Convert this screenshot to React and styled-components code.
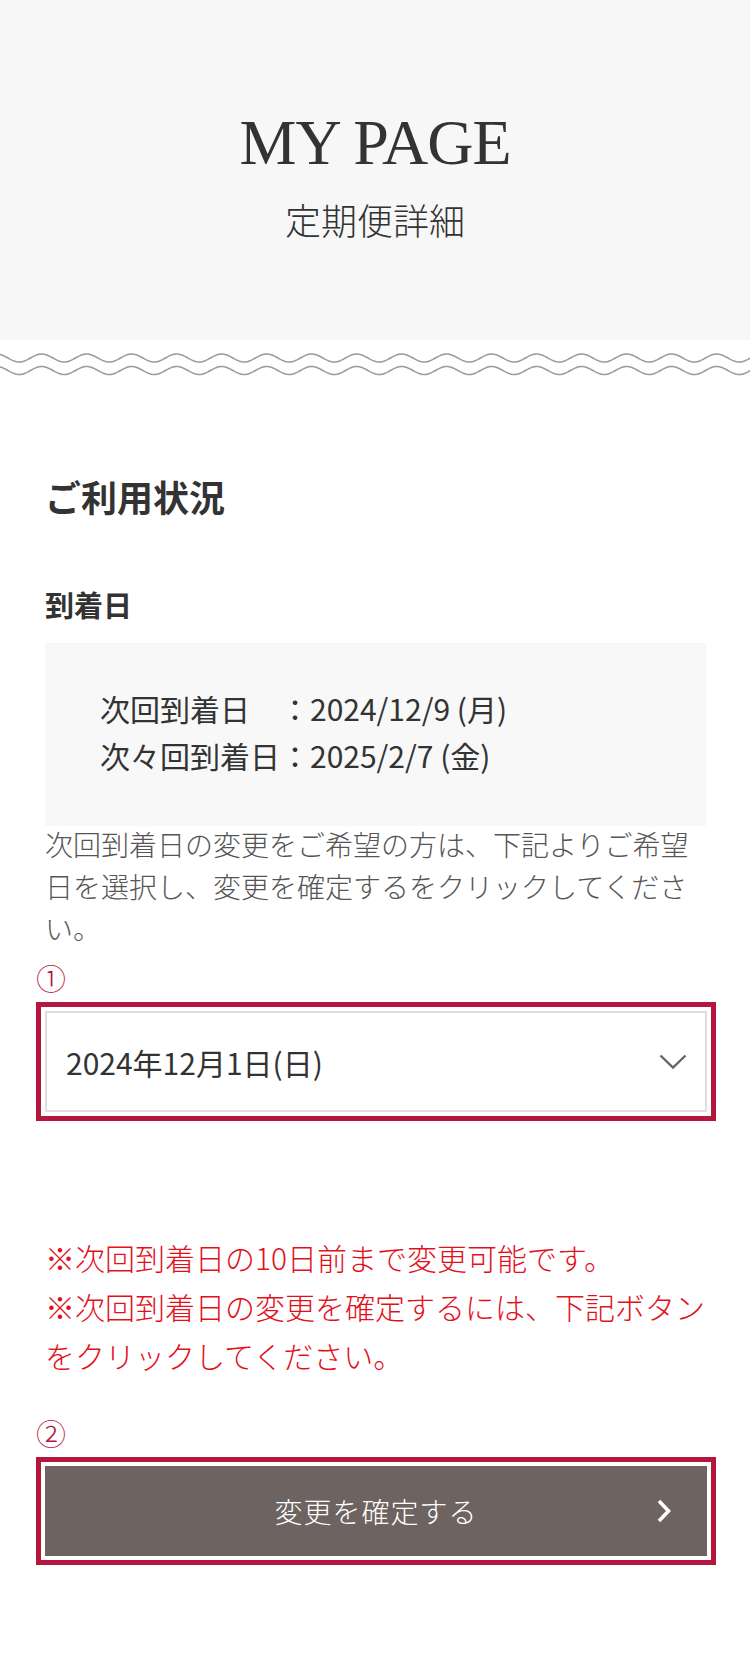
import React from "react";
import styled, { createGlobalStyle } from "styled-components";

const GlobalStyle = createGlobalStyle`
  html, body {
    margin: 0;
    padding: 0;
    background: #ffffff;
  }
  body {
    font-family: "Noto Sans CJK JP", "Noto Sans", sans-serif;
    color: #333333;
  }
  *, *::before, *::after {
    box-sizing: border-box;
  }
`;

const CRIMSON = "#b5163e";

const Page = styled.div`
  width: 750px;
  min-height: 1656px;
  background: #ffffff;
`;

const Header = styled.header`
  height: 340px;
  background: #f7f7f7;
  padding-top: 111px;
  text-align: center;
`;

const PageTitle = styled.h1`
  margin: 0;
  font-family: "Liberation Serif", "Times New Roman", serif;
  font-weight: 400;
  font-size: 64px;
  line-height: 64px;
  letter-spacing: -1px;
  color: #333333;
`;

const PageSubtitle = styled.p`
  margin: 19px 0 0;
  font-size: 36px;
  line-height: 50px;
  font-weight: 300;
  color: #333333;
`;

const WaveBand = styled.svg`
  display: block;
  width: 750px;
  height: 44px;
`;

const Main = styled.main`
  padding: 86px 44px 91px 45px;
`;

const SectionTitle = styled.h2`
  margin: 0;
  font-size: 36px;
  line-height: 52px;
  font-weight: 700;
  color: #333333;
`;

const FieldLabel = styled.h3`
  margin: 62px 0 0;
  font-size: 29px;
  line-height: 40px;
  font-weight: 700;
  color: #333333;
`;

const DateBox = styled.div`
  margin-top: 19px;
  background: #f8f8f8;
  padding: 42px 55px 47px;
`;

const DateRow = styled.p`
  margin: 0;
  font-size: 30px;
  line-height: 47px;
  color: #333333;
  white-space: nowrap;
`;

const Guide = styled.p`
  margin: -3px 0 0;
  font-size: 28px;
  line-height: 42px;
  font-weight: 300;
  color: #555555;
`;

const Step = styled.div`
  margin: ${(p) => p.$top}px -10px 0 -9px;
`;

const Marker = styled.span`
  display: block;
  font-size: 30px;
  line-height: 30px;
  font-weight: 300;
  color: ${CRIMSON};
`;

const Frame = styled.div`
  margin-top: 10px;
  border: 5px solid ${CRIMSON};
  padding: 4px;
  background: #ffffff;
`;

const SelectBox = styled.div`
  height: 101px;
  border: 2px solid #dedede;
  background: #ffffff;
  display: flex;
  align-items: center;
  justify-content: space-between;
  padding: 0 18px 0 19px;
  font-size: 30px;
  color: #333333;
`;

const Caution = styled.div`
  margin-top: 112px;
  color: #e3101c;
  font-size: 30px;
  line-height: 49px;
  font-weight: 300;
`;

const CautionLine = styled.p`
  margin: 0;
`;

const ActionButton = styled.button`
  width: 100%;
  height: 90px;
  border: none;
  margin: 0;
  padding: 0;
  background: #6d6360;
  color: #ffffff;
  font-family: inherit;
  font-size: 28px;
  font-weight: 300;
  letter-spacing: 1px;
  display: grid;
  grid-template-columns: 1fr auto 1fr;
  align-items: center;
  cursor: pointer;
`;

const ButtonLabel = styled.span`
  grid-column: 2;
`;

const ButtonArrow = styled.svg`
  grid-column: 3;
  justify-self: end;
  margin-right: 35px;
  display: block;
`;

const wavePath = (cy) => {
  const A = 4;
  const P = 45;
  const x0 = 41.7;
  let d = "";
  for (let x = -2; x <= 752; x += 1) {
    const y = cy - A * Math.cos((2 * Math.PI * (x - x0)) / P);
    d += (x === -2 ? "M" : "L") + x + " " + y.toFixed(2) + " ";
  }
  return d;
};

const Waves = () => (
  <WaveBand viewBox="0 0 750 44" aria-hidden="true">
    <path d={wavePath(18)} fill="none" stroke="#9b9b9b" strokeWidth="1.6" />
    <path d={wavePath(30.5)} fill="none" stroke="#9b9b9b" strokeWidth="1.6" />
  </WaveBand>
);

const ChevronDown = () => (
  <svg width="28" height="16" viewBox="0 0 28 16" aria-hidden="true">
    <polyline points="1.5,1.5 14,13.5 26.5,1.5" fill="none" stroke="#666666" strokeWidth="2.4" />
  </svg>
);

export default function App() {
  return (
    <>
      <GlobalStyle />
      <Page>
        <Header>
          <PageTitle>MY PAGE</PageTitle>
          <PageSubtitle>定期便詳細</PageSubtitle>
        </Header>
        <Waves />
        <Main>
          <SectionTitle>ご利用状況</SectionTitle>
          <FieldLabel>到着日</FieldLabel>
          <DateBox>
            <DateRow>次回到着日　：2024/12/9 (月)</DateRow>
            <DateRow>次々回到着日：2025/2/7 (金)</DateRow>
          </DateBox>
          <Guide>
            次回到着日の変更をご希望の方は、下記よりご希望日を選択し、変更を確定するをクリックしてください。
          </Guide>

          <Step $top={13}>
            <Marker>①</Marker>
            <Frame>
              <SelectBox>
                <span>2024年12月1日(日)</span>
                <ChevronDown />
              </SelectBox>
            </Frame>
          </Step>

          <Caution>
            <CautionLine>※次回到着日の10日前まで変更可能です。</CautionLine>
            <CautionLine>※次回到着日の変更を確定するには、下記ボタンをクリックしてください。</CautionLine>
          </Caution>

          <Step $top={37}>
            <Marker>②</Marker>
            <Frame>
              <ActionButton type="button">
                <ButtonLabel>変更を確定する</ButtonLabel>
                <ButtonArrow width="16" height="26" viewBox="0 0 16 26" aria-hidden="true">
                  <polyline points="3,3 12.5,13 3,23" fill="none" stroke="#ffffff" strokeWidth="3.6" />
                </ButtonArrow>
              </ActionButton>
            </Frame>
          </Step>
        </Main>
      </Page>
    </>
  );
}
